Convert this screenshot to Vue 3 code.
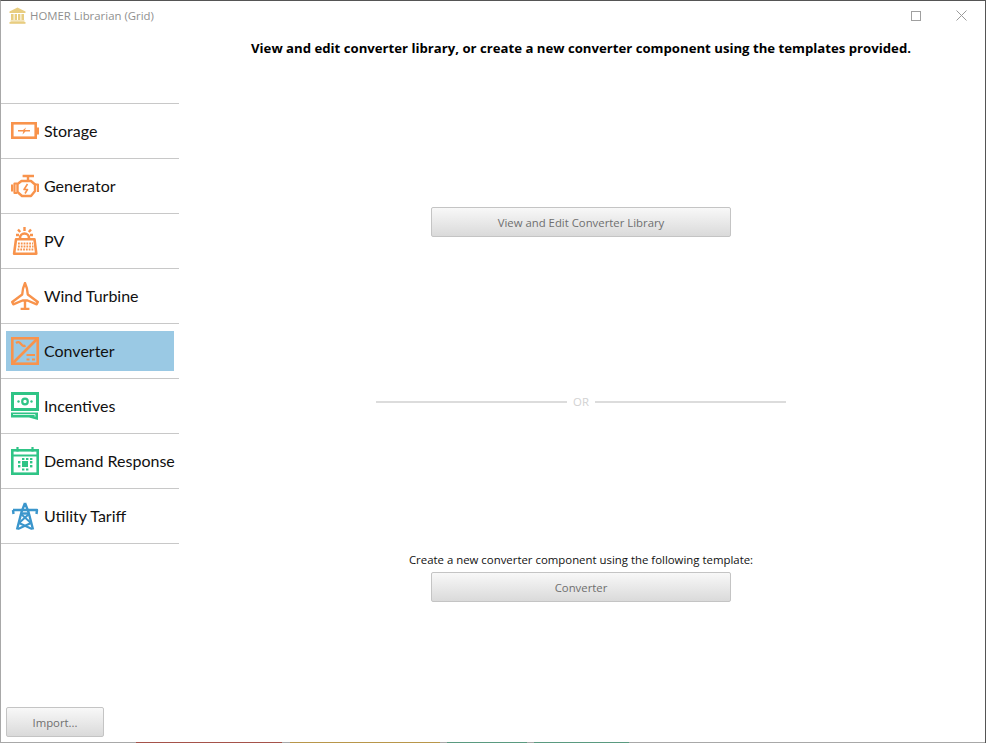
<script setup>
const items = [
  { name: 'Storage', icon: 'storage' },
  { name: 'Generator', icon: 'generator' },
  { name: 'PV', icon: 'pv' },
  { name: 'Wind Turbine', icon: 'wind' },
  { name: 'Converter', icon: 'converter', active: true },
  { name: 'Incentives', icon: 'incentives' },
  { name: 'Demand Response', icon: 'demand' },
  { name: 'Utility Tariff', icon: 'utility' },
]
const strips = [
  { w: 135, c: 'transparent' },
  { w: 146, c: '#a5524a' },
  { w: 8, c: 'transparent' },
  { w: 150, c: '#b8964a' },
  { w: 7, c: 'transparent' },
  { w: 80, c: '#5a9a80' },
  { w: 7, c: 'transparent' },
  { w: 95, c: '#5a9a80' },
]
</script>

<template>
  <div class="window">
    <header class="titlebar">
      <div class="app-title">
        <svg class="logo" width="17" height="17" viewBox="0 0 17 17" fill="#e8cd80">
          <path d="M8.5 0.5 L16.5 4.5 V6 H0.5 V4.5 Z" />
          <rect x="2" y="7" width="2.6" height="6" />
          <rect x="5.6" y="7" width="2.4" height="6" />
          <rect x="9" y="7" width="2.4" height="6" />
          <rect x="12.4" y="7" width="2.6" height="6" />
          <rect x="1.5" y="13.5" width="14" height="1.2" />
          <rect x="0.5" y="15" width="16" height="1.8" />
        </svg>
        <span>HOMER Librarian (Grid)</span>
      </div>
      <div class="controls">
        <svg width="10" height="10" viewBox="0 0 10 10" fill="none" stroke="#a0a0a0" stroke-width="1">
          <rect x="0.5" y="0.5" width="9" height="9" />
        </svg>
        <svg width="11" height="11" viewBox="0 0 11 11" fill="none" stroke="#9a9a9a" stroke-width="1">
          <path d="M0.5 0.5 L10.5 10.5 M10.5 0.5 L0.5 10.5" />
        </svg>
      </div>
    </header>

    <div class="body">
      <aside class="sidebar">
        <nav class="nav">
          <div v-for="item in items" :key="item.name" class="nav-row">
            <div class="nav-item" :class="{ active: item.active }">
              <svg class="nav-icon" width="28" height="28" viewBox="0 0 28 28" fill="none">
                <g v-if="item.icon === 'storage'" stroke="#f8934c" stroke-width="2.6">
                  <rect x="1.3" y="6.3" width="23.4" height="14.4" />
                  <rect x="25.6" y="10.5" width="2.4" height="7" fill="#f8934c" stroke="none" />
                  <path d="M7 13 H12 L15 10.5 L14 13 H19 V14.6 H14.5 L11.5 17.5 L12.3 14.6 H7 Z" fill="#f8934c" stroke="none" />
                </g>
                <g v-else-if="item.icon === 'generator'" stroke="#f8934c" stroke-width="2.4" stroke-linejoin="round">
                  <path d="M11.6 4 H23 M17 4 V8.5" />
                  <path d="M6.5 12 L10.5 9 H20 L24 12.5 V19 L20 24 H11 L6.5 20 Z" />
                  <path d="M6 11.5 H3.5 V21 H6 M1 12.5 V19.5" stroke-width="2.2" />
                  <path d="M24 12.5 H27 V20" stroke-width="2.2" />
                  <path d="M16.5 12 L13 17.5 H16.5 L14 21.5" stroke-width="1.6" />
                </g>
                <g v-else-if="item.icon === 'pv'" stroke="#f8934c">
                  <path d="M9 11 A4.5 4.5 0 0 1 18 11" stroke-width="2.6" />
                  <path d="M13.5 0 V4 M7 2.5 L9.2 5 M20 2.5 L17.8 5 M5 8 H8 M19 8 H22" stroke-width="2.4" />
                  <path d="M5 12.3 H23.5 L25.3 26.7 H3.1 Z" stroke-width="2.6" stroke-linejoin="round" />
                  <path d="M7 16.5 H22 M7 19.5 H22.5 M6.5 22.5 H23" stroke-width="2" stroke-dasharray="1.8 1" />
                </g>
                <g v-else-if="item.icon === 'wind'" stroke="#f8934c" stroke-width="2.4" stroke-linejoin="round">
                  <path d="M14 1 C12.3 4.5 11.5 8.5 11.2 12.5 L1.2 20 L2.3 22.3 L11.5 18.5 H16.5 L25.7 22.3 L26.8 20 L16.8 12.5 C16.5 8.5 15.7 4.5 14 1 Z" />
                  <path d="M14 19 V27 M9.6 27 H18.4" />
                </g>
                <g v-else-if="item.icon === 'converter'" stroke="#f8934c" stroke-width="2.6">
                  <rect x="1.3" y="1.3" width="25.4" height="25.4" />
                  <path d="M1.5 26.5 L26.5 1.5" />
                  <path d="M5 6 C7 4.5 8.5 5 10 7 S13 9.5 14.5 8.5" stroke-width="2.2" />
                  <path d="M15.5 18 H24 M15.5 22.5 H18.5 M21 22.5 H24" stroke-width="2.2" />
                </g>
                <g v-else-if="item.icon === 'incentives'">
                  <rect x="0" y="0" width="28" height="19" fill="#2fc486" />
                  <rect x="3" y="3" width="22" height="13" fill="#ffffff" />
                  <circle cx="14" cy="9.5" r="2.8" stroke="#2fc486" stroke-width="2.2" fill="none" />
                  <circle cx="7.5" cy="9.5" r="1.2" fill="#2fc486" />
                  <circle cx="20.5" cy="9.5" r="1.2" fill="#2fc486" />
                  <path d="M0 20.5 H27 V28 L18 25.5 H0 Z" fill="#2fc486" />
                  <path d="M2 22.5 H24 V24.6" stroke="#ffffff" stroke-width="0.8" />
                </g>
                <g v-else-if="item.icon === 'demand'" stroke="#2fc486" stroke-width="2.6">
                  <rect x="1.3" y="3.3" width="25.4" height="23.4" />
                  <path d="M1 8.5 H27" stroke-width="2" />
                  <path d="M6.5 0 V4.5 M21.5 0 V4.5" stroke-width="2.2" />
                  <g fill="#2fc486" stroke="none">
                    <rect x="11" y="14" width="6" height="6" />
                    <rect x="7" y="14" width="2.4" height="2.4" /><rect x="7" y="18" width="2.4" height="2.4" />
                    <rect x="19" y="14" width="2.4" height="2.4" /><rect x="19" y="18" width="2.4" height="2.4" />
                    <rect x="11" y="21.5" width="2.4" height="2" /><rect x="15" y="21.5" width="2.4" height="2" />
                    <rect x="19" y="11" width="2.4" height="2" /><rect x="15" y="11" width="2.4" height="2" />
                    <rect x="11" y="11" width="2.4" height="2" />
                  </g>
                </g>
                <g v-else stroke="#3b96cc" stroke-width="2.4" stroke-linejoin="round">
                  <path d="M14 1 L10.5 10 L6 27.5 M14 1 L17.5 10 L22 27.5" />
                  <path d="M2 8 H26 L25.5 12 M2 8 L2.5 12" />
                  <path d="M10 11.5 H18" />
                  <path d="M10 12 L20 21 L7 27 M18 12 L8 21 L21 27" stroke-width="2" />
                </g>
              </svg>
              <span class="nav-label">{{ item.name }}</span>
            </div>
          </div>
        </nav>
        <button class="btn import">Import...</button>
      </aside>

      <main class="main">
        <h1 class="heading">View and edit converter library, or create a new converter component using the templates provided.</h1>
        <button class="btn wide view">View and Edit Converter Library</button>
        <div class="or"><i></i><span>OR</span><i></i></div>
        <p class="hint">Create a new converter component using the following template:</p>
        <button class="btn wide">Converter</button>
      </main>
    </div>

    <div class="strip">
      <span v-for="(s, i) in strips" :key="i" :style="{ width: s.w + 'px', background: s.c }"></span>
    </div>
  </div>
</template>

<style>
html, body { margin: 0; padding: 0; background: #fff; }
</style>

<style scoped>
.window {
  width: 986px;
  height: 743px;
  box-sizing: border-box;
  border-top: 1px solid #555;
  border-right: 1px solid #555;
  border-left: 1px solid #a8a8a8;
  background: #fff;
  display: flex;
  flex-direction: column;
  overflow: hidden;
}
.titlebar {
  height: 29px;
  flex: none;
  display: flex;
  align-items: center;
  justify-content: space-between;
}
.app-title {
  display: flex;
  align-items: center;
  gap: 4px;
  padding-left: 8px;
  font: 11.4px "Open Sans", sans-serif;
  color: #8f8f8f;
}
.logo { flex: none; }
.controls {
  display: flex;
  align-items: center;
  gap: 35px;
  padding-right: 18px;
}
.body { flex: 1; display: flex; min-height: 0; }
.sidebar {
  width: 178px;
  flex: none;
  display: flex;
  flex-direction: column;
  padding-top: 73px;
  box-sizing: border-box;
}
.nav { border-top: 1px solid #c8c8c8; }
.nav-row {
  height: 54px;
  border-bottom: 1px solid #c8c8c8;
  display: flex;
  align-items: center;
  padding: 0 5px;
}
.nav-item {
  flex: 1;
  height: 40px;
  padding-left: 5px;
  display: flex;
  align-items: center;
  gap: 5px;
  font: 16px Lato, sans-serif;
  color: #111;
  white-space: nowrap;
}
.nav-item.active { background: #9ac9e4; }
.nav-icon { flex: none; }
.nav-label { padding-bottom: 2px; }
.btn {
  display: block;
  box-sizing: border-box;
  height: 30px;
  padding: 0;
  border: 1px solid #c4c4c4;
  border-radius: 2px;
  background: linear-gradient(#f8f8f8, #dadada);
  color: #6f6f6f;
  font: 11.35px "Open Sans", sans-serif;
  text-align: center;
}
.import {
  width: 98px;
  margin: auto 0 5px 5px;
}
.main {
  flex: 1;
  display: flex;
  flex-direction: column;
  align-items: center;
  min-width: 0;
  padding-right: 2px;
}
.heading {
  margin: 9px 0 0;
  font: bold 13.18px/18px "Open Sans", sans-serif;
  color: #000;
  white-space: nowrap;
}
.wide { width: 300px; }
.view { margin-top: 150px; }
.or {
  width: 410px;
  margin-top: 157px;
  display: flex;
  align-items: center;
  gap: 6px;
  font: 11.35px/16px "Open Sans", sans-serif;
  color: #d2d2d2;
}
.or i { flex: 1; height: 2px; background: #dcdcdc; }
.hint {
  margin: 141px 0 4px;
  font: 11.4px/17px "Open Sans", sans-serif;
  color: #111;
}
.strip { height: 1px; flex: none; display: flex; background: #a8a8a8; }
.strip span { display: block; height: 1px; }
</style>
